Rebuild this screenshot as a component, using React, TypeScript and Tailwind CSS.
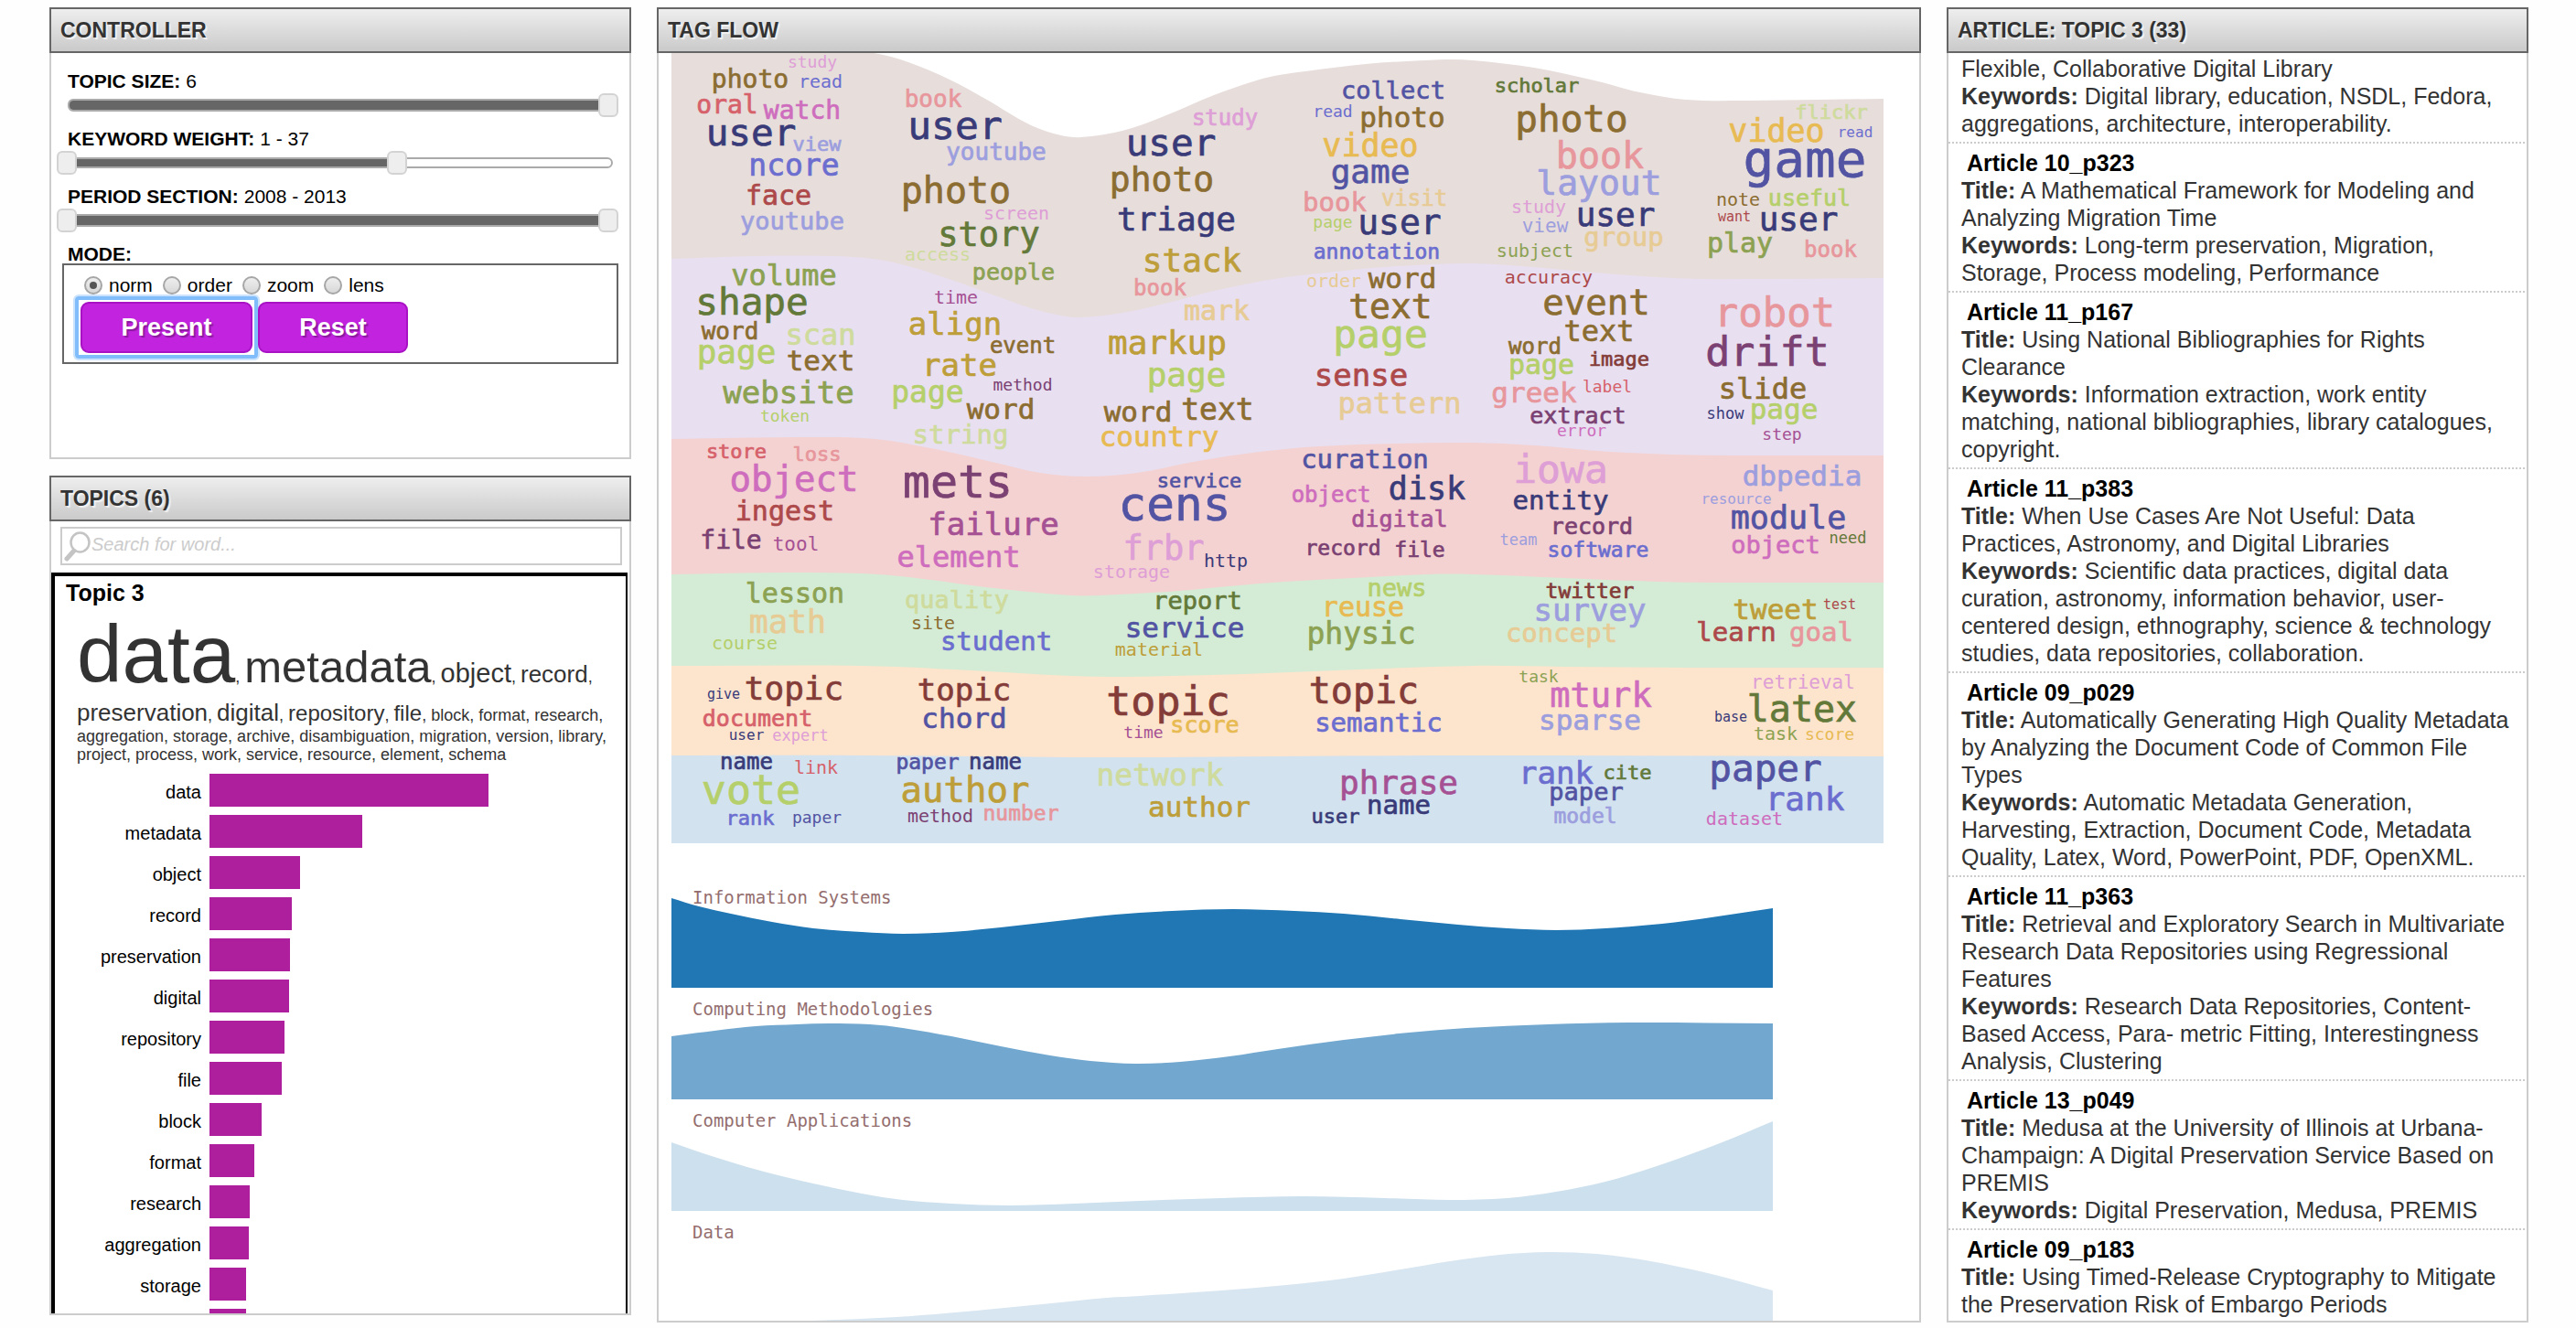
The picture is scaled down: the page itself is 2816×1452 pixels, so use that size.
import React, { useState } from "react";

type Point = [number, number];
type Word = [text: string, x: number, baseline: number, size: number, color: string];

/* Colour families used by the tag flow. */
const NAVY = "#393b79";
const INDIGO = "#5254a3";
const BLUE = "#6b6ecf";
const LILAC = "#9c9ede";
const MOSS = "#637939";
const OLIVE = "#8ca252";
const LIME = "#b5cf6b";
const PALE = "#cedb9c";
const BROWN = "#8c6d31";
const GOLD = "#bd9e39";
const AMBER = "#e7ba52";
const SAND = "#e7cb94";
const MAROON = "#843c39";
const BRICK = "#ad494a";
const CORAL = "#d6616b";
const ROSE = "#e7969c";
const PLUM = "#7b4173";
const PURPLE = "#a55194";
const ORCHID = "#ce6dbd";
const PINK = "#de9ed6";

const WORDS: Word[] = [
  ["study", 167, 16, 18, PINK],
  ["photo", 99, 38, 28, BROWN],
  ["read", 176, 38, 20, BLUE],
  ["oral", 74, 66, 28, CORAL],
  ["watch", 156, 72, 28, ORCHID],
  ["user", 100, 101, 41, NAVY],
  ["view", 172, 107, 22, LILAC],
  ["ncore", 147, 134, 33, BLUE],
  ["face", 130, 166, 30, BRICK],
  ["youtube", 145, 193, 27, LILAC],
  ["volume", 136, 254, 32, OLIVE],
  ["shape", 101, 286, 41, MOSS],
  ["word", 77, 313, 26, BROWN],
  ["scan", 176, 319, 32, PALE],
  ["page", 84, 339, 36, LIME],
  ["text", 176, 347, 31, BROWN],
  ["website", 141, 383, 34, OLIVE],
  ["token", 137, 403, 18, LIME],
  ["store", 84, 443, 22, CORAL],
  ["loss", 172, 446, 22, ROSE],
  ["object", 147, 479, 39, ORCHID],
  ["ingest", 137, 511, 30, BRICK],
  ["file", 78, 542, 28, PLUM],
  ["tool", 149, 544, 21, PURPLE],
  ["lesson", 148, 601, 30, OLIVE],
  ["math", 140, 634, 35, SAND],
  ["course", 93, 652, 20, LIME],
  ["give", 70, 706, 15, NAVY],
  ["topic", 147, 707, 36, MAROON],
  ["document", 107, 736, 25, CORAL],
  ["user", 95, 751, 16, NAVY],
  ["expert", 154, 752, 17, PINK],
  ["name", 95, 783, 24, NAVY],
  ["link", 171, 788, 20, CORAL],
  ["vote", 100, 821, 45, LIME],
  ["rank", 99, 844, 22, BLUE],
  ["paper", 172, 842, 18, INDIGO],

  ["book", 299, 59, 26, ROSE],
  ["user", 323, 94, 43, NAVY],
  ["youtube", 368, 117, 26, LILAC],
  ["photo", 324, 164, 40, BROWN],
  ["screen", 390, 182, 20, PINK],
  ["story", 360, 211, 37, MOSS],
  ["access", 304, 227, 20, PALE],
  ["people", 387, 248, 25, OLIVE],
  ["time", 324, 274, 20, PURPLE],
  ["align", 323, 308, 34, GOLD],
  ["event", 397, 328, 24, BROWN],
  ["rate", 328, 353, 34, GOLD],
  ["page", 293, 382, 33, LIME],
  ["method", 397, 369, 18, PLUM],
  ["word", 373, 400, 31, BROWN],
  ["string", 329, 427, 29, PALE],
  ["mets", 326, 486, 50, PLUM],
  ["failure", 365, 527, 34, PURPLE],
  ["element", 327, 562, 32, ORCHID],
  ["quality", 325, 607, 27, PALE],
  ["site", 299, 630, 20, BROWN],
  ["student", 368, 653, 29, BLUE],
  ["topic", 333, 708, 34, MAROON],
  ["chord", 333, 738, 31, INDIGO],
  ["paper", 293, 783, 23, INDIGO],
  ["name", 367, 783, 24, NAVY],
  ["author", 334, 819, 39, GOLD],
  ["method", 307, 841, 20, PLUM],
  ["number", 395, 839, 23, ROSE],

  ["study", 618, 79, 24, PINK],
  ["user", 559, 112, 41, NAVY],
  ["photo", 549, 151, 38, BROWN],
  ["triage", 565, 194, 36, NAVY],
  ["stack", 582, 239, 36, GOLD],
  ["book", 547, 265, 24, ROSE],
  ["mark", 609, 292, 30, SAND],
  ["markup", 555, 329, 36, GOLD],
  ["page", 576, 364, 36, LIME],
  ["word", 523, 403, 31, BROWN],
  ["text", 610, 401, 33, BROWN],
  ["country", 546, 430, 31, AMBER],
  ["service", 590, 475, 22, INDIGO],
  ["cens", 563, 511, 51, INDIGO],
  ["frbr", 551, 554, 37, PINK],
  ["http", 619, 562, 20, NAVY],
  ["storage", 516, 574, 20, PINK],
  ["report", 588, 608, 27, MOSS],
  ["service", 574, 639, 31, INDIGO],
  ["material", 546, 659, 20, GOLD],
  ["topic", 556, 724, 45, MAROON],
  ["time", 529, 749, 18, PURPLE],
  ["score", 596, 743, 25, AMBER],
  ["network", 547, 801, 33, PALE],
  ["author", 590, 835, 31, GOLD],

  ["collect", 802, 50, 27, INDIGO],
  ["read", 736, 70, 18, BLUE],
  ["photo", 812, 81, 31, BROWN],
  ["video", 777, 113, 35, AMBER],
  ["game", 777, 142, 36, INDIGO],
  ["book", 738, 173, 29, ROSE],
  ["visit", 825, 167, 24, SAND],
  ["page", 736, 191, 18, LIME],
  ["user", 809, 198, 38, NAVY],
  ["annotation", 784, 225, 23, BLUE],
  ["order", 737, 256, 20, SAND],
  ["word", 812, 257, 31, BROWN],
  ["text", 799, 290, 38, BROWN],
  ["page", 788, 322, 43, LIME],
  ["sense", 767, 364, 34, BRICK],
  ["pattern", 809, 394, 32, SAND],
  ["curation", 771, 454, 29, INDIGO],
  ["object", 734, 491, 24, ORCHID],
  ["disk", 839, 488, 35, NAVY],
  ["digital", 809, 518, 25, PURPLE],
  ["record", 747, 549, 23, PLUM],
  ["file", 831, 551, 23, PLUM],
  ["news", 806, 594, 27, LIME],
  ["reuse", 769, 616, 30, AMBER],
  ["physic", 767, 646, 33, OLIVE],
  ["topic", 770, 711, 40, MAROON],
  ["semantic", 786, 742, 29, BLUE],
  ["phrase", 808, 810, 36, PURPLE],
  ["name", 808, 832, 29, NAVY],
  ["user", 739, 842, 22, NAVY],

  ["scholar", 959, 43, 22, MOSS],
  ["photo", 997, 86, 41, BROWN],
  ["book", 1028, 126, 40, ROSE],
  ["layout", 1027, 155, 38, LILAC],
  ["study", 961, 175, 20, PINK],
  ["user", 1045, 189, 36, NAVY],
  ["view", 968, 196, 21, LILAC],
  ["group", 1054, 211, 29, SAND],
  ["subject", 957, 223, 20, OLIVE],
  ["accuracy", 972, 252, 20, BRICK],
  ["event", 1024, 286, 39, BROWN],
  ["text", 1027, 315, 32, BROWN],
  ["word", 957, 329, 24, BROWN],
  ["image", 1049, 342, 22, MAROON],
  ["page", 964, 351, 30, LIME],
  ["greek", 956, 382, 31, ROSE],
  ["label", 1036, 371, 18, CORAL],
  ["extract", 1004, 405, 25, PLUM],
  ["error", 1008, 419, 18, ORCHID],
  ["iowa", 985, 470, 43, PINK],
  ["entity", 985, 499, 29, NAVY],
  ["record", 1019, 526, 25, PLUM],
  ["team", 939, 538, 17, LILAC],
  ["software", 1026, 551, 23, BLUE],
  ["twitter", 1017, 596, 23, MAROON],
  ["survey", 1017, 621, 34, LILAC],
  ["concept", 986, 644, 29, SAND],
  ["task", 961, 688, 18, OLIVE],
  ["mturk", 1029, 715, 37, ORCHID],
  ["sparse", 1017, 740, 31, LILAC],
  ["rank", 980, 799, 34, BLUE],
  ["cite", 1058, 794, 22, MOSS],
  ["paper", 1013, 817, 27, INDIGO],
  ["model", 1012, 842, 23, LILAC],

  ["flickr", 1281, 72, 22, PALE],
  ["video", 1221, 97, 35, AMBER],
  ["read", 1307, 92, 16, BLUE],
  ["game", 1252, 135, 56, INDIGO],
  ["note", 1179, 167, 20, BROWN],
  ["useful", 1257, 167, 25, LIME],
  ["want", 1175, 184, 15, BRICK],
  ["user", 1245, 194, 36, NAVY],
  ["play", 1181, 218, 30, OLIVE],
  ["book", 1280, 223, 24, ROSE],
  ["robot", 1219, 299, 44, ROSE],
  ["drift", 1211, 342, 45, PLUM],
  ["slide", 1206, 378, 32, BROWN],
  ["show", 1165, 400, 17, NAVY],
  ["page", 1229, 400, 31, LIME],
  ["step", 1227, 423, 18, PURPLE],
  ["dbpedia", 1249, 473, 31, LILAC],
  ["resource", 1177, 493, 16, LILAC],
  ["module", 1234, 520, 35, INDIGO],
  ["object", 1220, 547, 27, ORCHID],
  ["need", 1299, 536, 17, MOSS],
  ["tweet", 1220, 619, 31, GOLD],
  ["test", 1290, 608, 15, BRICK],
  ["learn", 1177, 643, 29, BRICK],
  ["goal", 1270, 643, 29, ROSE],
  ["retrieval", 1250, 695, 21, PINK],
  ["base", 1171, 731, 15, NAVY],
  ["latex", 1249, 731, 40, MOSS],
  ["task", 1220, 751, 20, OLIVE],
  ["score", 1279, 751, 18, AMBER],
  ["paper", 1209, 796, 41, INDIGO],
  ["rank", 1252, 828, 36, BLUE],
  ["dataset", 1186, 844, 20, ORCHID],
];

/* Upper edge of each band; a band is painted down to the floor of the flow. */
const BANDS: { color: string; edge: Point[] }[] = [
  {
    color: "#e7dddb",
    edge: [
      [14, -8], [130, -10], [235, 0], [273, 10], [318, 29], [357, 50], [407, 79], [440, 90], [462, 92],
      [507, 85], [555, 68], [607, 46], [647, 32], [673, 25], [707, 20], [773, 12], [860, 7], [890, 8],
      [957, 16], [1023, 30], [1073, 43], [1123, 51], [1190, 52], [1339, 50],
    ],
  },
  {
    color: "#e8dff0",
    edge: [
      [14, 225], [107, 222], [190, 222], [235, 225], [273, 233], [323, 249], [373, 267], [407, 279],
      [440, 287], [462, 289], [507, 284], [557, 273], [607, 260], [673, 247], [740, 239], [807, 233],
      [890, 230], [957, 234], [1023, 240], [1090, 245], [1140, 247], [1207, 247], [1339, 246],
    ],
  },
  {
    color: "#f4d2d1",
    edge: [
      [14, 422], [157, 420], [237, 422], [307, 434], [373, 449], [417, 459], [467, 463], [523, 459],
      [590, 446], [657, 436], [723, 430], [807, 427], [890, 426], [957, 429], [1040, 436], [1107, 439],
      [1173, 440], [1339, 440],
    ],
  },
  {
    color: "#d4ecd5",
    edge: [
      [14, 570], [140, 568], [223, 569], [273, 573], [357, 584], [450, 593], [483, 593], [557, 589],
      [657, 580], [740, 575], [840, 570], [890, 570], [990, 574], [1090, 578], [1157, 579], [1339, 579],
    ],
  },
  {
    color: "#fde4cd",
    edge: [
      [14, 670], [223, 670], [323, 674], [450, 681], [507, 682], [640, 679], [740, 675], [890, 670],
      [990, 671], [1123, 672], [1339, 672],
    ],
  },
  {
    color: "#d2e2ef",
    edge: [[14, 768], [223, 768], [450, 770], [540, 770], [673, 769], [890, 768], [1339, 769]],
  },
];
const BAND_FLOOR = 864;

const AREAS: { label: string; labelY: number; floor: number; color: string; edge: Point[] }[] = [
  {
    label: "Information Systems",
    labelY: 930,
    floor: 1022,
    color: "#2077b4",
    edge: [
      [14, 924], [44, 933], [79, 941], [124, 950], [169, 957], [222, 961], [267, 963], [320, 961],
      [374, 956], [436, 949], [499, 942], [561, 938], [628, 936], [695, 938], [749, 941], [811, 947],
      [874, 953], [928, 957], [981, 959], [1035, 957], [1097, 952], [1151, 945], [1218, 935],
    ],
  },
  {
    label: "Computing Methodologies",
    labelY: 1052,
    floor: 1144,
    color: "#72a8cf",
    edge: [
      [14, 1075], [61, 1069], [106, 1064], [151, 1062], [186, 1061], [231, 1062], [267, 1066],
      [320, 1075], [374, 1086], [428, 1096], [472, 1102], [521, 1105], [570, 1103], [624, 1097],
      [677, 1089], [749, 1079], [820, 1071], [883, 1066], [972, 1062], [1061, 1060], [1218, 1061],
    ],
  },
  {
    label: "Computer Applications",
    labelY: 1174,
    floor: 1266,
    color: "#cde0ee",
    edge: [
      [14, 1191], [61, 1207], [115, 1223], [169, 1236], [222, 1247], [267, 1254], [320, 1258],
      [383, 1260], [454, 1258], [526, 1255], [615, 1252], [704, 1250], [794, 1252], [865, 1254],
      [928, 1252], [981, 1245], [1035, 1234], [1097, 1215], [1160, 1192], [1218, 1168],
    ],
  },
  {
    label: "Data",
    labelY: 1296,
    floor: 1388,
    color: "#d8e6f1",
    edge: [
      [14, 1387], [124, 1387], [195, 1385], [276, 1381], [347, 1375], [419, 1368], [490, 1361],
      [526, 1359], [615, 1353], [686, 1347], [749, 1340], [811, 1330], [865, 1321], [919, 1314],
      [972, 1311], [1026, 1313], [1079, 1320], [1151, 1335], [1218, 1353],
    ],
  },
];

/* Catmull-Rom curve through the points, closed down to a flat floor. */
function areaPath(points: Point[], floor: number): string {
  let d = `M${points[0][0]},${points[0][1]}`;
  for (let i = 0; i < points.length - 1; i++) {
    const a = points[Math.max(i - 1, 0)];
    const b = points[i];
    const c = points[i + 1];
    const e = points[Math.min(i + 2, points.length - 1)];
    const third = (c[0] - b[0]) / 3;
    const slopeB = (c[1] - a[1]) / (c[0] - a[0]);
    const slopeC = (e[1] - b[1]) / (e[0] - b[0]);
    d += `C${b[0] + third},${b[1] + slopeB * third} ${c[0] - third},${c[1] - slopeC * third} ${c[0]},${c[1]}`;
  }
  return `${d}V${floor}H${points[0][0]}Z`;
}

const BARS: [string, number][] = [
  ["data", 305],
  ["metadata", 167],
  ["object", 99],
  ["record", 90],
  ["preservation", 88],
  ["digital", 87],
  ["repository", 82],
  ["file", 79],
  ["block", 57],
  ["format", 49],
  ["research", 44],
  ["aggregation", 43],
  ["storage", 40],
  ["archive", 40],
];

const ARTICLES = [
  {
    id: "Article 10_p323",
    title: "A Mathematical Framework for Modeling and Analyzing Migration Time",
    keywords: "Long-term preservation, Migration, Storage, Process modeling, Performance",
  },
  {
    id: "Article 11_p167",
    title: "Using National Bibliographies for Rights Clearance",
    keywords:
      "Information extraction, work entity matching, national bibliographies, library catalogues, copyright.",
  },
  {
    id: "Article 11_p383",
    title: "When Use Cases Are Not Useful: Data Practices, Astronomy, and Digital Libraries",
    keywords:
      "Scientific data practices, digital data curation, astronomy, information behavior, user-centered design, ethnography, science & technology studies, data repositories, collaboration.",
  },
  {
    id: "Article 09_p029",
    title:
      "Automatically Generating High Quality Metadata by Analyzing the Document Code of Common File Types",
    keywords:
      "Automatic Metadata Generation, Harvesting, Extraction, Document Code, Metadata Quality, Latex, Word, PowerPoint, PDF, OpenXML.",
  },
  {
    id: "Article 11_p363",
    title:
      "Retrieval and Exploratory Search in Multivariate Research Data Repositories using Regressional Features",
    keywords:
      "Research Data Repositories, Content-Based Access, Para- metric Fitting, Interestingness Analysis, Clustering",
  },
  {
    id: "Article 13_p049",
    title:
      "Medusa at the University of Illinois at Urbana-Champaign: A Digital Preservation Service Based on PREMIS",
    keywords: "Digital Preservation, Medusa, PREMIS",
  },
  {
    id: "Article 09_p183",
    title: "Using Timed-Release Cryptography to Mitigate the Preservation Risk of Embargo Periods",
    keywords: "",
  },
];

function Panel({
  title,
  className = "",
  children,
}: {
  title: string;
  className?: string;
  children: React.ReactNode;
}) {
  return (
    <section className={`flex min-h-0 flex-col ${className}`}>
      <header className="flex h-[50px] shrink-0 items-center border-2 border-[#666] bg-linear-to-b from-[#eee] to-[#cacaca] px-2.5">
        <h2 className="text-[23px] leading-7 font-bold text-[#333] [text-shadow:2px_2px_1px_#f2f2f2]">{title}</h2>
      </header>
      <div className="min-h-0 flex-1 overflow-hidden border-x-2 border-b-2 border-[#ccc] bg-white">{children}</div>
    </section>
  );
}

const THUMB =
  "pointer-events-none z-10 m-0 h-[26px] w-full appearance-none bg-transparent outline-none [&::-webkit-slider-runnable-track]:h-[26px] [&::-webkit-slider-thumb]:pointer-events-auto [&::-webkit-slider-thumb]:h-[26px] [&::-webkit-slider-thumb]:w-[22px] [&::-webkit-slider-thumb]:appearance-none [&::-webkit-slider-thumb]:rounded-[6px] [&::-webkit-slider-thumb]:border-2 [&::-webkit-slider-thumb]:border-[#d3d3d3] [&::-webkit-slider-thumb]:bg-[#eee]";

function Slider({
  label,
  min,
  max,
  values,
  onChange,
  thin = false,
}: {
  label: string;
  min: number;
  max: number;
  values: number[];
  onChange: (values: number[]) => void;
  thin?: boolean;
}) {
  const top = values[values.length - 1];
  const fill = ((top - min) / (max - min)) * 100;
  const id = label.toLowerCase().replace(/\W+/g, "-");
  return (
    <div className="flex flex-col gap-[3px]">
      <div className="flex gap-1.5 pl-3 leading-5">
        <label htmlFor={id} className="font-bold">
          {label}:
        </label>
        <output>{values.join(" - ")}</output>
      </div>
      <div className="grid items-center *:col-start-1 *:row-start-1">
        <div
          className={`mr-1.5 ml-3 overflow-hidden rounded-[6px] border-2 border-[#aaa] bg-white ${thin ? "h-3" : "h-3.5"}`}
        >
          <div className="h-full bg-[#666]" style={{ width: `${fill}%` }} />
        </div>
        {values.map((value, i) => (
          <input
            key={i}
            id={i === 0 ? id : undefined}
            aria-label={i === 0 ? undefined : `${label} upper limit`}
            type="range"
            min={min}
            max={max}
            value={value}
            onChange={(e) => onChange(values.map((v, j) => (j === i ? Number(e.target.value) : v)))}
            className={THUMB}
          />
        ))}
      </div>
    </div>
  );
}

const BUTTON =
  "relative h-14 rounded-[9px] border-2 border-[#a812c4] bg-[#c123de] text-[27px] font-bold text-white outline-none [text-shadow:2px_2px_1px_#8a1a9e]";

function Controller() {
  const [size, setSize] = useState([6]);
  const [weight, setWeight] = useState([1, 37]);
  const [period, setPeriod] = useState([2008, 2013]);
  const [mode, setMode] = useState("norm");
  return (
    <form
      className="flex flex-col gap-3.5 pt-[21px] pr-3 pb-[102px] pl-1.5 text-[21px] text-black"
      onSubmit={(e) => e.preventDefault()}
    >
      <Slider label="TOPIC SIZE" min={1} max={6} values={size} onChange={setSize} />
      <Slider label="KEYWORD WEIGHT" min={1} max={60} values={weight} onChange={setWeight} thin />
      <Slider label="PERIOD SECTION" min={2008} max={2013} values={period} onChange={setPeriod} />
      <fieldset>
        <legend className="pl-3 leading-5 font-bold">MODE:</legend>
        <div className="ml-1.5 flex flex-col gap-2 border-2 border-[#666] pt-3 pb-2.5 pl-[18px]">
          <div className="flex gap-[11px] pl-1">
            {["norm", "order", "zoom", "lens"].map((m) => (
              <label key={m} className="flex items-center gap-[7px] leading-5">
                <input
                  type="radio"
                  name="mode"
                  checked={mode === m}
                  onChange={() => setMode(m)}
                  className="grid size-5 appearance-none place-items-center rounded-full border-2 border-[#a6a6a6] bg-linear-to-b from-[#eee] to-[#d8d8d8] before:size-2 before:rounded-full checked:before:bg-[#555]"
                />
                {m}
              </label>
            ))}
          </div>
          <div className="flex gap-1.5">
            <button
              type="button"
              className={`${BUTTON} w-[188px] before:absolute before:-inset-2 before:rounded-[4px] before:border-4 before:border-[#82bdfb] before:shadow-[0_0_0_2px_#cbe3fd]`}
            >
              Present
            </button>
            <button type="button" className={`${BUTTON} w-[164px]`}>
              Reset
            </button>
          </div>
        </div>
      </fieldset>
    </form>
  );
}

function Topics() {
  return (
    <div className="pt-1.5">
      <label className="mr-2 ml-2.5 flex h-[42px] items-center border-2 border-[#ccc] pl-0.5">
        <svg viewBox="0 0 30 34" className="h-[34px] w-[30px] shrink-0" fill="none" aria-hidden="true">
          <path d="M11 22 3 31" stroke="#c4c4c4" strokeWidth="5" strokeLinecap="round" />
          <ellipse cx="17.500" cy="13" rx="10" ry="10.500" fill="#fff" stroke="#c4c4c4" strokeWidth="2.500" />
        </svg>
        <input
          type="text"
          aria-label="Search for word"
          placeholder="Search for word..."
          className="h-full min-w-0 flex-1 pb-1 text-[20px] italic outline-none placeholder:text-[#ccc]"
        />
      </label>
      <div className="mt-2 mr-0.5 border-t-4 border-r-2 border-l-4 border-black pt-1">
        <h3 className="pl-3 text-[25px] leading-7 font-bold text-black">Topic 3</h3>
        <div className="mt-[9px] pl-6 text-[18px] whitespace-nowrap text-[#333]">
          <p className="leading-none">
            <span className="text-[89px]">data</span>, <span className="text-[49px]">metadata</span>,{" "}
            <span className="text-[29px]">object</span>, <span className="text-[26px]">record</span>,
          </p>
          <p className="mt-1.5 leading-none">
            <span className="text-[26px]">preservation</span>, <span className="text-[26px]">digital</span>,{" "}
            <span className="text-[24px]">repository</span>, <span className="text-[24px]">file</span>, block, format,
            research,
          </p>
          <p className="mt-[3px] leading-5">
            aggregation, storage, archive, disambiguation, migration, version, library,
            <br />
            project, process, work, service, resource, element, schema
          </p>
        </div>
        <ul className="mt-[11px] flex flex-col gap-[9px] text-[20px] text-black">
          {BARS.map(([name, width]) => (
            <li key={name} className="flex h-9 items-center gap-[9px]">
              <span className="w-[160px] pt-1 text-right leading-6">{name}</span>
              <span className="h-full bg-[#ad1f9c]" style={{ width }} />
            </li>
          ))}
        </ul>
      </div>
    </div>
  );
}

function TagFlow() {
  return (
    <svg viewBox="0 0 1378 1386" className="block w-full" role="img" aria-label="Tag flow">
      {BANDS.map((band) => (
        <path key={band.color} d={areaPath(band.edge, BAND_FLOOR)} fill={band.color} />
      ))}
      <g fontFamily="'DejaVu Sans Mono', monospace" textAnchor="middle">
        {WORDS.map(([text, x, y, size, color], i) => (
          <text
            key={i}
            x={x + 1}
            y={y}
            fontSize={size}
            fill={color}
            stroke={size >= 22 ? color : "none"}
            strokeWidth={size >= 22 ? 0.7 : 0}
          >
            {text}
          </text>
        ))}
      </g>
      {AREAS.map((area) => (
        <g key={area.label}>
          <path d={areaPath(area.edge, area.floor)} fill={area.color} />
          <text x={37} y={area.labelY} fontSize={19} fill="#946e6e" fontFamily="'DejaVu Sans Mono', monospace">
            {area.label}
          </text>
        </g>
      ))}
    </svg>
  );
}

const ITEM = "border-b-2 border-dotted border-[#ccc] pr-2 pb-[5px] pl-3.5";

function Articles() {
  return (
    <div className="mr-0.5 pt-0.5 text-[25px] leading-[30px] text-[#333]">
      <article className={ITEM}>
        <p>Flexible, Collaborative Digital Library</p>
        <p>
          <b>Keywords:</b> Digital library, education, NSDL, Fedora, aggregations, architecture, interoperability.
        </p>
      </article>
      {ARTICLES.map((a) => (
        <article key={a.id} className={`${ITEM} pt-1.5`}>
          <h3 className="pl-1.5 font-bold text-black">{a.id}</h3>
          <p>
            <b>Title:</b> {a.title}
          </p>
          {a.keywords && (
            <p>
              <b>Keywords:</b> {a.keywords}
            </p>
          )}
        </article>
      ))}
    </div>
  );
}

export default function App() {
  return (
    <main className="flex h-screen gap-7 overflow-hidden bg-[#fefefe] pt-2 pr-[52px] pb-1.5 pl-[54px] font-['Helvetica_Neue','Liberation_Sans',sans-serif]">
      <div className="flex w-[636px] shrink-0 flex-col gap-[18px] pb-2">
        <Panel title="CONTROLLER" className="shrink-0">
          <Controller />
        </Panel>
        <Panel title="TOPICS (6)" className="flex-1">
          <Topics />
        </Panel>
      </div>
      <Panel title="TAG FLOW" className="min-w-0 flex-1">
        <TagFlow />
      </Panel>
      <Panel title="ARTICLE: TOPIC 3 (33)" className="w-[636px] shrink-0">
        <Articles />
      </Panel>
    </main>
  );
}
